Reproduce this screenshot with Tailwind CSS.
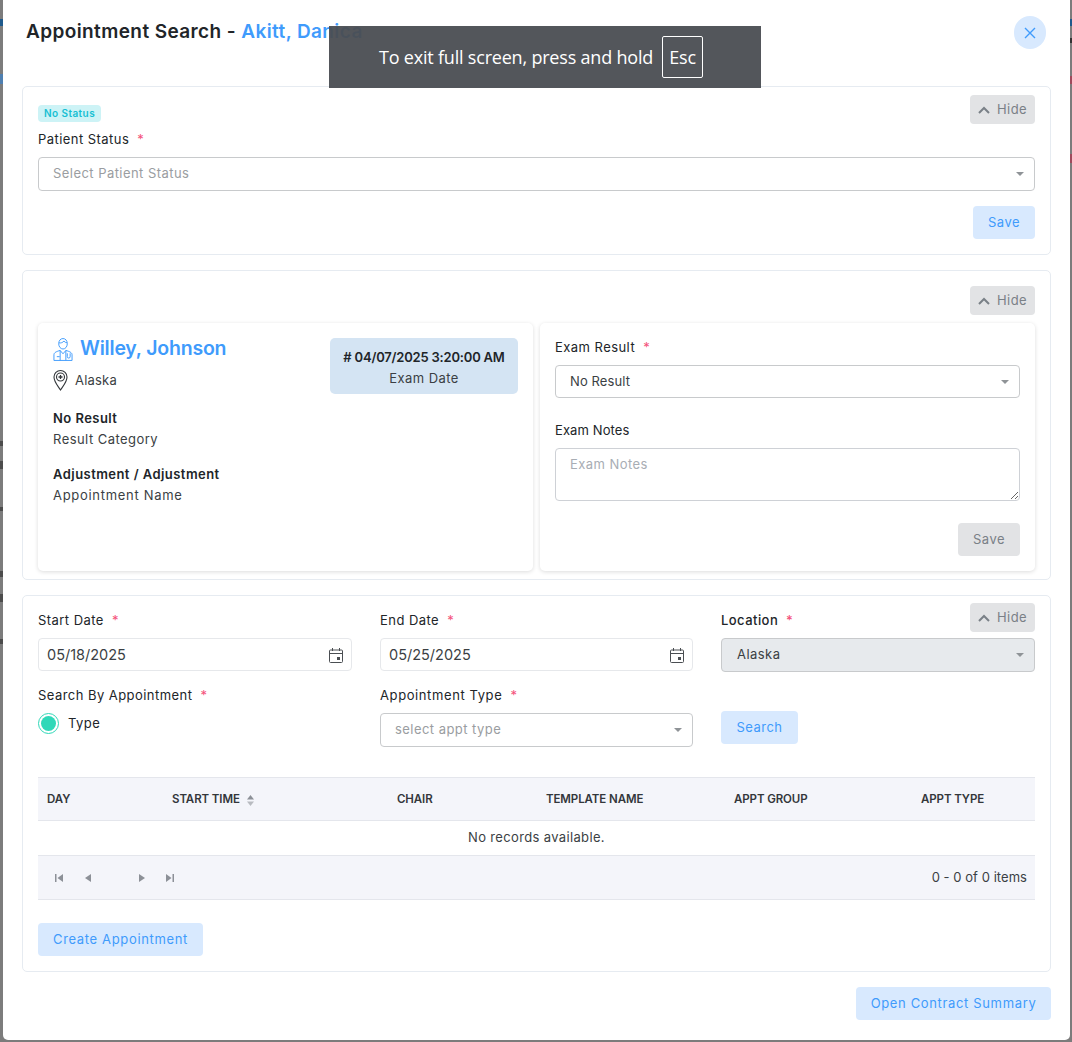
<!DOCTYPE html>
<html lang="en">
<head>
    <meta charset="UTF-8">
    <meta name="viewport" content="width=device-width, initial-scale=1.0">
    <title>Appointment Search</title>
    <script src="https://cdn.jsdelivr.net/npm/@tailwindcss/browser@4"></script>
</head>
<body class="relative h-[1042px] w-[1072px] overflow-hidden bg-[#7c7c7c] font-['Inter',sans-serif] text-[13px] tracking-[0.45px] text-[#212529]">

    <!-- Page behind the modal, only slivers show -->
    <div class="absolute top-[19px] left-0 h-[7px] w-[3px] bg-[#1f5a8c]"></div>
    <div class="absolute top-[74px] left-0 h-[10px] w-[3px] bg-[#4f7fb0]"></div>
    <div class="absolute top-[441px] left-0 h-[5px] w-[3px] bg-[#4c4c4c]"></div>
    <div class="absolute top-[461px] left-0 h-[8px] w-[3px] bg-[#4c4c4c]"></div>
    <div class="absolute top-[507px] left-0 h-[4px] w-[3px] bg-[#4c4c4c]"></div>
    <div class="absolute top-[571px] left-0 h-[6px] w-[3px] bg-[#4c4c4c]"></div>
    <div class="absolute top-[594px] left-0 h-[8px] w-[3px] bg-[#4c4c4c]"></div>
    <div class="absolute top-[639px] left-0 h-[5px] w-[3px] bg-[#4c4c4c]"></div>
    <div class="absolute top-[19px] right-0 h-[7px] w-[2px] bg-[#1f5a8c]"></div>
    <div class="absolute top-[38px] right-0 h-[5px] w-[2px] bg-[#333333]"></div>
    <div class="absolute top-[76px] right-0 h-[8px] w-[2px] bg-[#a04a5c]"></div>
    <div class="absolute top-[154px] right-0 h-[9px] w-[2px] bg-[#a04a5c]"></div>

    <!-- Modal -->
    <div class="ml-[3px] h-[1040px] w-[1067px] rounded-b-[5px] bg-white px-[19px]">

        <!-- Header -->
        <div class="flex h-[86px] items-start justify-between">
            <h1 class="mt-[20px] ml-[4px] text-[19px] leading-6 font-semibold tracking-[0.4px] text-[#212529]">Appointment Search - <span class="text-[#3f9bfc]">Akitt, Danica</span></h1>
            <button class="mt-[16px] mr-[5px] flex h-[33px] w-[32px] items-center justify-center rounded-full bg-[#d8e9fe] text-[#3f9bfc]">
                <svg class="h-3 w-3" viewBox="0 0 12 12" fill="none" stroke="currentColor" stroke-width="1.4"><path d="M1 1l10 10M11 1L1 11"/></svg>
            </button>
        </div>

        <!-- Patient status -->
        <section class="relative h-[169px] rounded-[5px] border border-[#e6ebf1] px-[15px] pt-[18px]">
            <button class="absolute top-[8px] right-[15px] flex h-[29px] w-[65px] items-center justify-center gap-[7px] rounded-[4px] bg-[#e2e3e5] text-[#7a8087]">
                <svg class="h-[8px] w-[12px]" viewBox="0 0 12 8" fill="none" stroke="currentColor" stroke-width="2"><path d="M1 7l5-5 5 5"/></svg>
                Hide
            </button>
            <span class="flex h-[17px] w-[63px] items-center justify-center rounded-[4px] bg-[#cdf3f6] text-[10px] font-semibold text-[#17bfd3]">No Status</span>
            <label class="mt-[8px] block h-[18px] leading-[18px]">Patient Status <span class="ml-1 text-[#f4517a]">*</span></label>
            <div class="mt-[9px] flex h-[34px] items-center justify-between rounded-[4px] border border-[#c8cacc] pr-[10px] pl-[14px] text-[#9a9da1]">
                Select Patient Status
                <span class="h-0 w-0 border-x-[4px] border-t-[4px] border-x-transparent border-t-[#8f9397]"></span>
            </div>
            <div class="mt-[15px] flex justify-end">
                <button class="h-[33px] w-[62px] rounded-[4px] bg-[#d8e9fe] text-[#3f9bfc]">Save</button>
            </div>
        </section>

        <!-- Exam -->
        <section class="mt-[15px] h-[310px] rounded-[5px] border border-[#e6ebf1] px-[15px] pt-[15px]">
            <div class="flex justify-end">
                <button class="flex h-[29px] w-[65px] items-center justify-center gap-[7px] rounded-[4px] bg-[#e2e3e5] text-[#7a8087]">
                    <svg class="h-[8px] w-[12px]" viewBox="0 0 12 8" fill="none" stroke="currentColor" stroke-width="2"><path d="M1 7l5-5 5 5"/></svg>
                    Hide
                </button>
            </div>
            <div class="mt-[8px] grid h-[248px] grid-cols-[495px_495px] gap-[7px]">

                <!-- Exam details -->
                <div class="rounded-[5px] bg-white px-[15px] pt-[13px] shadow-[0_1px_4px_rgba(0,0,0,0.14)]">
                    <div class="flex items-start justify-between">
                        <div>
                            <div class="flex h-[26px] items-center gap-[7px]">
                                <svg class="h-[25px] w-[20px] text-[#3f9bfc]" viewBox="0 0 21 25" fill="none" stroke="currentColor" stroke-width="1">
                                    <path d="M6 6.500C6 3 8 1 10.500 1S15 3 15 6.500c0 3-2 5.500-4.500 5.500S6 9.500 6 6.500z"/>
                                    <path d="M6.200 5.500c2 .5 4-.3 5.300-1.800 .7 1 2 1.700 3.300 1.800"/>
                                    <path d="M1 24v-6c0-2.500 3-3.500 6.500-4.500L10.500 17l3-3.500c3.500 1 6.500 2 6.500 4.500v6z"/>
                                    <path d="M7.500 13.500V24M13.500 13.500V24M4 20h3M15 16.500v3.500a1.500 1.500 0 0 0 3 0v-3.500"/>
                                </svg>
                                <span class="text-[19.500px] font-semibold tracking-[-0.2px] text-[#3f9bfc]">Willey, Johnson</span>
                            </div>
                            <div class="mt-[7px] flex h-[22px] items-center gap-[7px] text-[#3b3f44]">
                                <svg class="h-[22px] w-[15px] text-[#33373b]" viewBox="0 0 15 22" fill="none" stroke="currentColor" stroke-width="1.100">
                                    <path d="M7.500 21C5 17 1 13 1 8a6.500 6.500 0 0 1 13 0c0 5-4 9-6.500 13z"/>
                                    <circle cx="7.500" cy="8" r="4"/>
                                    <path d="M7.500 6v4M5.500 8h4" stroke-width="1.300"/>
                                </svg>
                                <span class="pt-[1px] tracking-[0.2px]">Alaska</span>
                            </div>
                        </div>
                        <div class="mt-[2px] flex h-[56px] w-[188px] flex-col items-center justify-center rounded-[5px] bg-[#d4e4f3] pt-[3px]">
                            <span class="leading-[21px] font-semibold tracking-[-0.2px]">&#35; 04/07/2025 3:20:00 AM</span>
                            <span class="leading-[21px] text-[#3b3f44]">Exam Date</span>
                        </div>
                    </div>
                    <p class="mt-[14px] leading-[21px] font-semibold">No Result</p>
                    <p class="leading-[21px] text-[#3b3f44]">Result Category</p>
                    <p class="mt-[14px] leading-[21px] font-semibold">Adjustment / Adjustment</p>
                    <p class="leading-[21px] tracking-[0.7px] text-[#3b3f44]">Appointment Name</p>
                </div>

                <!-- Exam form -->
                <div class="rounded-[5px] bg-white px-[15px] pt-[15px] shadow-[0_1px_4px_rgba(0,0,0,0.14)]">
                    <label class="block h-[18px] leading-[18px]">Exam Result <span class="ml-1 text-[#f4517a]">*</span></label>
                    <div class="mt-[9px] flex h-[33px] items-center justify-between rounded-[4px] border border-[#c8cacc] pr-[10px] pl-[14px] tracking-[0.1px] text-[#3b3f44]">
                        No Result
                        <span class="h-0 w-0 border-x-[4px] border-t-[4px] border-x-transparent border-t-[#8f9397]"></span>
                    </div>
                    <label class="mt-[23px] block h-[18px] leading-[18px] tracking-[0.1px]">Exam Notes</label>
                    <textarea class="mt-[9px] block h-[53px] w-full rounded-[4px] border border-[#ced1d6] px-[14px] py-[6px] placeholder:text-[#a8adb4]" placeholder="Exam Notes"></textarea>
                    <div class="mt-[22px] flex justify-end">
                        <button class="h-[33px] w-[62px] rounded-[4px] bg-[#e2e3e5] text-[#7a8087]">Save</button>
                    </div>
                </div>
            </div>
        </section>

        <!-- Search -->
        <section class="relative mt-[15px] h-[377px] rounded-[5px] border border-[#e6ebf1] px-[15px] pt-[15px]">
            <button class="absolute top-[7px] right-[15px] flex h-[29px] w-[65px] items-center justify-center gap-[7px] rounded-[4px] bg-[#e2e3e5] text-[#7a8087]">
                <svg class="h-[8px] w-[12px]" viewBox="0 0 12 8" fill="none" stroke="currentColor" stroke-width="2"><path d="M1 7l5-5 5 5"/></svg>
                Hide
            </button>

            <div class="grid grid-cols-[314px_313px_314px] gap-x-[28px]">
                <div>
                    <label class="block h-[18px] leading-[18px]">Start Date <span class="ml-1 text-[#f4517a]">*</span></label>
                    <div class="mt-[9px] flex h-[33px] items-center justify-between rounded-[4px] border border-[#e6e8eb] px-[8px] pt-[1px] text-[14.500px] tracking-normal text-[#3b3f44]">
                        05/18/2025
                        <svg class="h-[15px] w-[14px] text-[#4a4e52]" viewBox="0 0 14 15" fill="none" stroke="currentColor"><rect x=".5" y="2" width="13" height="12.500" rx="1"/><path d="M.5 5.500h13M3.500 0v3M10.500 0v3"/><rect x="8" y="9" width="3" height="3" fill="currentColor" stroke="none"/></svg>
                    </div>
                </div>
                <div>
                    <label class="block h-[18px] leading-[18px]">End Date <span class="ml-1 text-[#f4517a]">*</span></label>
                    <div class="mt-[9px] flex h-[33px] items-center justify-between rounded-[4px] border border-[#e6e8eb] px-[8px] pt-[1px] text-[14.500px] tracking-normal text-[#3b3f44]">
                        05/25/2025
                        <svg class="h-[15px] w-[14px] text-[#4a4e52]" viewBox="0 0 14 15" fill="none" stroke="currentColor"><rect x=".5" y="2" width="13" height="12.500" rx="1"/><path d="M.5 5.500h13M3.500 0v3M10.500 0v3"/><rect x="8" y="9" width="3" height="3" fill="currentColor" stroke="none"/></svg>
                    </div>
                </div>
                <div>
                    <label class="block h-[18px] leading-[18px] font-medium">Location <span class="ml-1 text-[#f4517a]">*</span></label>
                    <div class="mt-[9px] flex h-[34px] items-center justify-between rounded-[4px] border border-[#c8cacc] bg-[#e7eaed] pr-[10px] pl-[15px] text-[#3b3f44]">
                        Alaska
                        <span class="h-0 w-0 border-x-[4px] border-t-[4px] border-x-transparent border-t-[#8f9397]"></span>
                    </div>
                </div>
                <div class="mt-[14px]">
                    <label class="block h-[18px] leading-[18px]">Search By Appointment <span class="ml-1 text-[#f4517a]">*</span></label>
                    <div class="mt-[9px] flex items-center gap-[9px]">
                        <span class="flex h-[21px] w-[21px] items-center justify-center rounded-full border border-[#2fd8b8]"><span class="h-[15px] w-[15px] rounded-full bg-[#2fd8b8]"></span></span>
                        Type
                    </div>
                </div>
                <div class="mt-[14px]">
                    <label class="block h-[18px] leading-[18px] tracking-[0.6px]">Appointment Type <span class="ml-1 text-[#f4517a]">*</span></label>
                    <div class="mt-[9px] flex h-[34px] items-center justify-between rounded-[4px] border border-[#c8cacc] pr-[10px] pl-[14px] text-[#9a9da1]">
                        select appt type
                        <span class="h-0 w-0 border-x-[4px] border-t-[4px] border-x-transparent border-t-[#8f9397]"></span>
                    </div>
                </div>
                <div class="mt-[39px]">
                    <button class="h-[33px] w-[77px] rounded-[4px] bg-[#d8e9fe] text-[#3f9bfc]">Search</button>
                </div>
            </div>

            <!-- Grid -->
            <div class="mt-[30px] grid h-[44px] grid-cols-[125px_225px_149px_188px_187px_114px] items-center border-y border-[#e4e6ec] bg-[#f4f5fa] pt-[2px] pl-[9px] text-[11.500px] font-semibold tracking-[-0.1px] text-[#33373b]">
                <span>DAY</span>
                <span class="flex items-center gap-[7px]">START TIME
                    <svg class="h-[11px] w-[7px]" viewBox="0 0 7 11"><path d="M3.500 0L7 4.500H0z" fill="#8c9097"/><path d="M3.500 11L0 6.500h7z" fill="#b8bbc0"/></svg>
                </span>
                <span>CHAIR</span>
                <span>TEMPLATE NAME</span>
                <span>APPT GROUP</span>
                <span>APPT TYPE</span>
            </div>
            <div class="flex h-[34px] items-center justify-center tracking-[0.35px] text-[#3b3f44]">No records available.</div>
            <div class="flex h-[45px] items-center justify-between border-y border-[#e4e6ec] bg-[#f4f5fa] pr-[8px] pl-[17px] text-[#3b3f44]">
                <div class="flex items-center text-[#8c9097]">
                    <svg class="h-[8px] w-[8px]" viewBox="0 0 8 8" fill="currentColor"><path d="M0 0h1.500v8H0zM8 0v8L2.500 4z"/></svg>
                    <svg class="ml-[22px] h-[8px] w-[6px]" viewBox="0 0 6 8" fill="currentColor"><path d="M6 0v8L0 4z"/></svg>
                    <svg class="ml-[48px] h-[8px] w-[6px]" viewBox="0 0 6 8" fill="currentColor"><path d="M0 0v8l6-4z"/></svg>
                    <svg class="ml-[21px] h-[8px] w-[8px]" viewBox="0 0 8 8" fill="currentColor"><path d="M8 0H6.500v8H8zM0 0v8l5.500-4z"/></svg>
                </div>
                <span class="tracking-[0.05px]">0 - 0 of 0 items</span>
            </div>
            <button class="mt-[23px] h-[33px] w-[165px] rounded-[4px] bg-[#d8e9fe] tracking-[0.65px] text-[#3f9bfc]">Create Appointment</button>
        </section>

        <div class="mt-[15px] flex justify-end">
            <button class="h-[33px] w-[195px] rounded-[4px] bg-[#d8e9fe] tracking-[0.65px] text-[#3f9bfc]">Open Contract Summary</button>
        </div>
    </div>

    <!-- Browser full screen notice -->
    <div class="absolute top-[26px] left-[329px] flex h-[62px] w-[432px] items-center bg-[#4a4d52]/95 pl-[50px] font-['Open_Sans',sans-serif] text-[18px] font-normal tracking-[-0.2px] text-white">
        <span>To exit full screen, press and hold</span>
        <span class="ml-[9px] flex h-[42px] w-[41px] items-center justify-center rounded-[2px] border border-white">Esc</span>
    </div>
</body>
</html>
